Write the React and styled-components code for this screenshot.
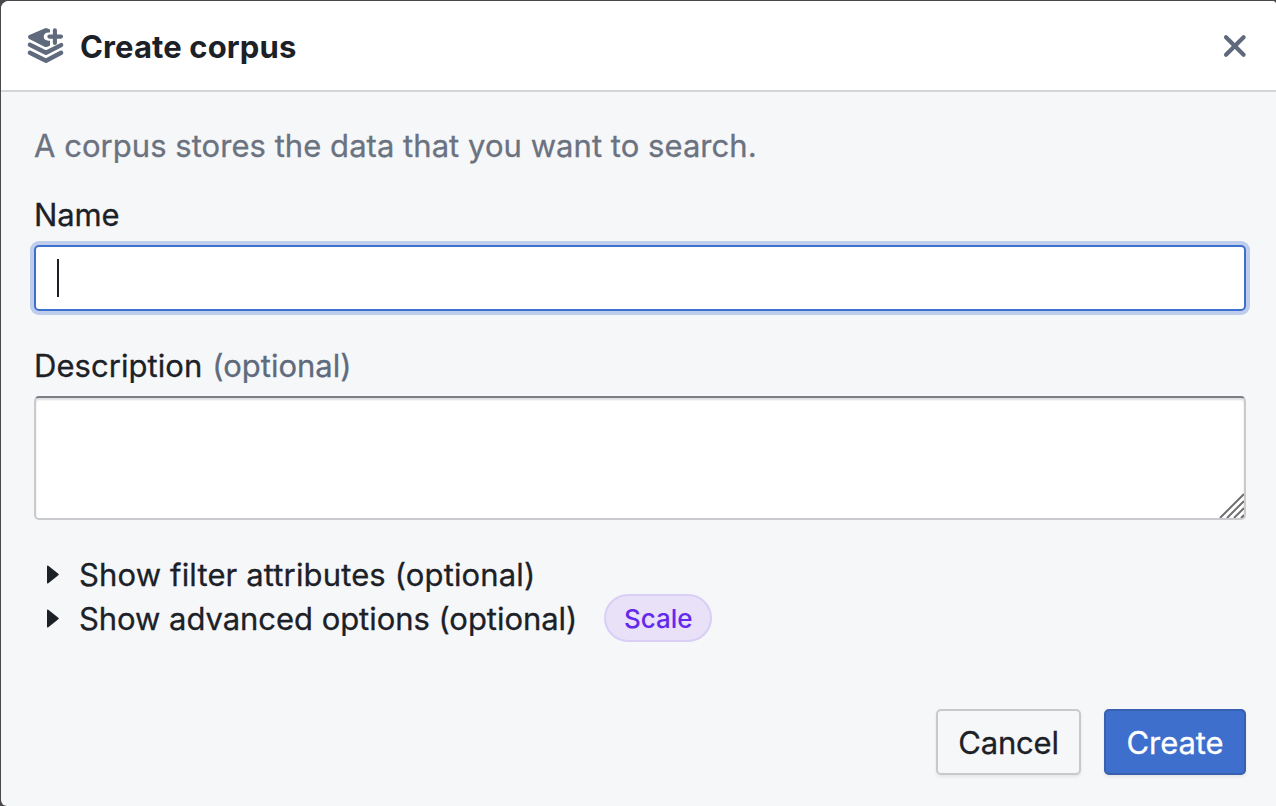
import React from 'react';
import styled, { createGlobalStyle } from 'styled-components';

const GlobalStyle = createGlobalStyle`
  * { box-sizing: border-box; }
  body { margin: 0; background: #4a484d; overflow: hidden; font-family: Inter, Roboto, sans-serif; font-size: 31px; color: #1c2127; }
`;

const Dialog = styled.main`
  display: flex;
  flex-direction: column;
  height: 805px;
  margin: 1px 0 0 1px;
  background: #f6f7f9;
  border-radius: 8px 4px 0 6px;
  overflow: hidden;
`;
const Header = styled.header`
  display: flex;
  align-items: center;
  height: 91px;
  padding: 0 20px 0 25px;
  background: #fff;
  border-bottom: 2px solid #d3d5d8;
`;
const HeaderIcon = styled.svg`
  width: 40px;
  height: 40px;
  flex: none;
`;
const Title = styled.h1`
  flex: 1;
  margin: 3px 0 0 14px;
  font-size: 31px;
  line-height: 38px;
  font-weight: 700;
  letter-spacing: ${(p) => p.$track}px;
`;
const CloseButton = styled.button`
  display: flex;
  width: 42px;
  height: 42px;
  padding: 0;
  border: 0;
  background: none;
`;
const Body = styled.section`
  display: flex;
  flex-direction: column;
  align-items: stretch;
  flex: 1;
  padding: 34px 30px 31px 33px;
`;
const Text = styled.span`
  line-height: 40px;
  white-space: nowrap;
  color: ${(p) => p.$color || '#1c2127'};
  letter-spacing: ${(p) => p.$track || 0}px;
  -webkit-text-stroke: 0.3px currentColor;
`;
const Label = styled.label`
  display: flex;
  gap: 10px;
  margin-top: ${(p) => p.$top}px;
`;
const NameField = styled.div`
  display: flex;
  align-items: center;
  height: 66px;
  margin-top: 10px;
  padding-left: 21px;
  background: #fff;
  border: 2px solid #3f6fcd;
  border-radius: 5px;
  box-shadow: 0 0 0 4px #bdcdeb;
`;
const Caret = styled.span`
  width: 2px;
  height: 38px;
  background: #1c2127;
`;
const DescriptionField = styled.div`
  display: flex;
  align-items: flex-end;
  justify-content: flex-end;
  height: 124px;
  margin-top: 10px;
  background: #fff;
  border: 2px solid #c9cacd;
  border-top-color: #7d7e83;
  border-radius: 5px;
  box-shadow: inset 0 2px 2px #dddee0;
`;
const Options = styled.div`
  display: flex;
  flex-direction: column;
  margin: 33px 0 0 13px;
`;
const OptionRow = styled.div`
  display: flex;
  align-items: center;
  height: 44px;
`;
const Marker = styled.svg`
  width: 12px;
  height: 19px;
  margin: -1px 20px 0 0;
`;
const Tag = styled.span`
  display: flex;
  align-items: center;
  justify-content: center;
  width: 108px;
  height: 48px;
  margin: -3px 0 0 27px;
  padding-top: 1px;
  border: 2px solid #d9cef6;
  border-radius: 24px;
  background: #e8e1f8;
  color: #6429eb;
  font-size: 26px;
  font-weight: 500;
  letter-spacing: 0;
`;
const Footer = styled.footer`
  display: flex;
  justify-content: flex-end;
  gap: 23px;
  margin-top: auto;
`;
const Button = styled.button`
  width: ${(p) => p.$width}px;
  height: 66px;
  padding: 0;
  border: 2px solid ${(p) => (p.$primary ? '#3760ae' : '#c8c9cc')};
  border-radius: 5px;
  background: ${(p) => (p.$primary ? '#3f6fcd' : '#f6f7f9')};
  box-shadow: 0 2px 3px rgba(17, 20, 24, 0.08);
  color: ${(p) => (p.$primary ? '#fff' : '#1c2127')};
  font: 400 31px Inter, Roboto, sans-serif;
  letter-spacing: ${(p) => p.$track}px;
  -webkit-text-stroke: 0.3px currentColor;
`;

function Option({ label, track, tag }) {
  return (
    <OptionRow>
      <Marker viewBox="0 0 12 19"><path d="M0 1.4Q0 0 1.3.8L11.3 8.7Q12.3 9.5 11.3 10.3L1.3 18.2Q0 19 0 17.6Z" fill="#1c2127" /></Marker>
      <Text $track={track}>{label}</Text>
      {tag && <Tag>{tag}</Tag>}
    </OptionRow>
  );
}

export default function App() {
  return (
    <>
      <GlobalStyle />
      <Dialog>
        <Header>
          <HeaderIcon viewBox="26 26 40 40" fill="#5f6b7c">
            <path d="M28.8 35.2 44.5 28.4Q46 27.8 47.5 28.4L50 29.5V32.4H48.6Q43.7 32.6 43.7 36.6T48.6 40.8H50V45.4L47.5 46.7Q46 47.4 44.5 46.7L28.8 38.8Q27 37 28.8 35.2Z" />
            <path d="M54.9 30.2V43M49.4 36.6H61" fill="none" stroke="#5f6b7c" strokeWidth="4.1" strokeLinecap="round" />
            <path d="M29.9 44.7 46 52.7 61.1 45.1M29.9 52.7 46 60.7 61.1 52.7" fill="none" stroke="#5f6b7c" strokeWidth="4.4" strokeLinecap="round" strokeLinejoin="round" />
          </HeaderIcon>
          <Title $track={0.13}>Create corpus</Title>
          <CloseButton aria-label="Close">
            <svg width="42" height="42" viewBox="0 0 42 42"><path d="M12 12.2 29.6 29.8M29.6 12.2 12 29.8" stroke="#5f6b7c" strokeWidth="4.2" strokeLinecap="round" /></svg>
          </CloseButton>
        </Header>
        <Body>
          <Text $color="#6b7280" $track={0.04}>A corpus stores the data that you want to search.</Text>
          <Label $top={29}><Text $track={-0.1}>Name</Text></Label>
          <NameField role="textbox" aria-label="Name"><Caret /></NameField>
          <Label $top={35}>
            <Text $track={0.05}>Description</Text>
            <Text $color="#5f6b7c" $track={0}>(optional)</Text>
          </Label>
          <DescriptionField role="textbox" aria-label="Description">
            <svg width="26" height="26" viewBox="0 0 26 26"><path d="M2 26 26 2M9 26 26 9M16 26 26 16M23 26 26 23" stroke="#707070" strokeWidth="2" /></svg>
          </DescriptionField>
          <Options>
            <Option label="Show filter attributes (optional)" track={0.14} />
            <Option label="Show advanced options (optional)" track={-0.05} tag="Scale" />
          </Options>
          <Footer>
            <Button $width={145} $track={-0.2}>Cancel</Button>
            <Button $width={142} $track={-0.1} $primary>Create</Button>
          </Footer>
        </Body>
      </Dialog>
    </>
  );
}
